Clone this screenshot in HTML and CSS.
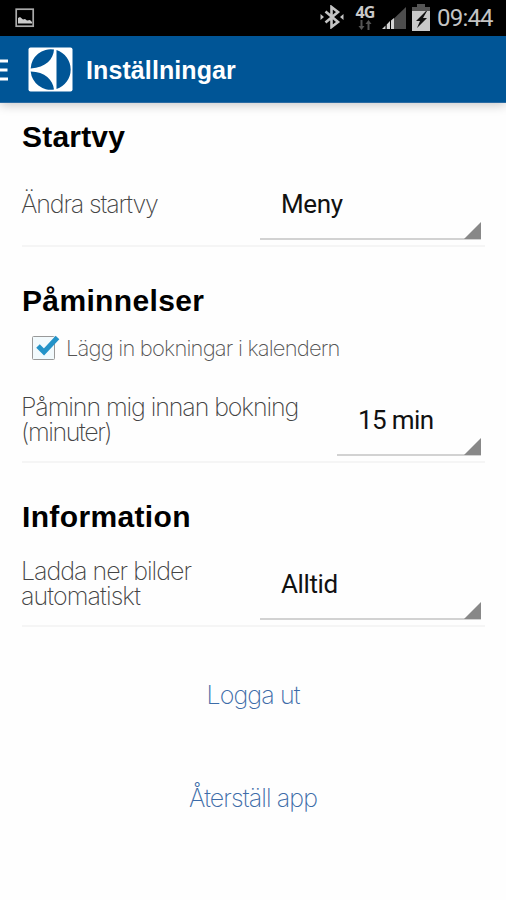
FILE: index.html
```html
<!DOCTYPE html>
<html lang="sv">
<head>
<meta charset="utf-8">
<title>Inställningar</title>
<link rel="stylesheet" href="styles.css">
</head>
<body>
<div class="status">
  <svg class="picture" width="20" height="20" viewBox="0 0 20 20"><rect x="1.2" y="1.2" width="17" height="17" fill="none" stroke="#aaa" stroke-width="1.7"/><path d="M3 15.500V10l2-1 3 2.500 2-.5 2 1.500 3-.5 2 2v1.500z" fill="#ccc"/></svg>
  <svg class="bluetooth" width="24" height="24" viewBox="0 0 24 24"><path d="M5.500 6.500 18 17l-6.500 5V2L18 7 5.500 17.500" fill="none" stroke="#c4c4c4" stroke-width="2.600"/><path d="M.5 9 4 12l-3.500 3zM23.500 9 20 12l3.500 3z" fill="#c4c4c4"/></svg>
  <div class="network"><span>4G</span><svg width="14" height="10" viewBox="0 0 14 10"><path d="M4.500 0v6h2L3.500 10 .5 6h2V0zM11.500 10V4h2l-3-4-3 4h2v6z" fill="#555"/></svg></div>
  <svg class="signal" width="24" height="24" viewBox="0 0 24 24"><path d="M12 12.500 24 1v22H12z" fill="#4d4d4d"/><path d="M0 23 3.500 19.500V23zM4.700 23v-4.500L8 15v8zM9 23V14.500L12 12v11z" fill="#d2d2d2"/></svg>
  <svg class="battery" width="18" height="27" viewBox="0 0 18 27"><path d="M5 0h8v3h5v4H0V3h5z" fill="#555"/><path d="M0 7h18v20H0z" fill="#c9c9c9"/><path d="m14 7-10 10h4l-3 7L15 14h-4l4-7z" fill="#111"/></svg>
  <time>09:44</time>
</div>
<header class="bar">
  <svg class="menu" width="8" height="22" viewBox="0 0 8 22"><path d="M0 2h8M0 11h7.500M0 20h8" stroke="#fff" stroke-width="3.200"/></svg>
  <svg class="logo" width="45" height="45" viewBox="0 0 45 45"><rect x=".5" y=".5" width="44" height="44" rx="2" fill="#fff"/><path d="M26 2.500C25.500 12 18 20.500 2.700 21.500A20 20 0 0 1 26 2.500zM2.700 24.500C17 24.500 25 33 26 42.500A20 20 0 0 1 2.700 24.500zM28.500 3A20.500 20.500 0 0 1 28.500 42z" fill="#005596"/></svg>
  <h1>Inställningar</h1>
</header>
<main>
  <section>
    <h2 class="t1">Startvy</h2>
    <div class="row">
      <p class="label l1">Ändra startvy</p>
      <div class="spinner"><span class="v1">Meny</span></div>
    </div>
  </section>
  <section>
    <h2 class="t2">Påminnelser</h2>
    <div class="check">
      <svg width="30" height="30" viewBox="0 0 30 30"><rect x="2.500" y="5.500" width="22" height="23" rx="1" fill="#f2fafd" stroke="#999"/><path d="m8 15 6 6L27.500 6.500" fill="none" stroke="#2493c8" stroke-width="5"/></svg>
      <span>Lägg in bokningar i kalendern</span>
    </div>
    <div class="row">
      <p class="label"><span class="l2">Påminn mig innan bokning</span><br><span class="l3">(minuter)</span></p>
      <div class="spinner narrow"><span class="v2">15 min</span></div>
    </div>
  </section>
  <section>
    <h2 class="t3">Information</h2>
    <div class="row">
      <p class="label"><span class="l4">Ladda ner bilder</span><br><span class="l5">automatiskt</span></p>
      <div class="spinner"><span class="v3">Alltid</span></div>
    </div>
  </section>
  <a class="action a1">Logga ut</a>
  <a class="action a2">Återställ app</a>
</main>
</body>
</html>
```
FILE: styles.css
```css
* { box-sizing: border-box; }
body { margin: 0; height: 900px; background: #fefefe; color: #000; font-family: "Liberation Sans", sans-serif; overflow: hidden; }
svg { display: block; flex: none; }
h1, h2, p { margin: 0; }
.status { height: 36px; background: #000; display: flex; align-items: flex-start; padding-left: 15px; }
.picture { margin-top: 8px; }
.bluetooth { margin: 5px 0 0 285px; }
.network { width: 20px; margin: 5px 0 0 11px; display: flex; flex-direction: column; align-items: center; }
.network span { font: 700 16px/14px "Open Sans", sans-serif; color: #c8c8c8; letter-spacing: -.8px; }
.network svg { margin-top: 1px; }
.signal { margin: 6px 0 0 7px; }
.battery { margin: 4px 0 0 6px; }
.status time { font: 24px/36px Roboto, sans-serif; color: #c4c4c4; margin-left: 7px; letter-spacing: -.8px; }
.bar { height: 67px; background: #005596; border-bottom: 1px solid #2a6ba3; box-shadow: 0 2px 10px rgba(0,0,0,.22); display: flex; align-items: center; padding-bottom: 1px; }
.menu { margin-top: 3px; }
.logo { margin: 2px 0 0 20px; }
h1 { font: 700 25px/30px "Liberation Sans", sans-serif; color: #fff; margin: 2px 0 0 13px; letter-spacing: .1px; }
main { padding: 0 21px 0 22px; display: flex; flex-direction: column; }
section { display: flex; flex-direction: column; }
h2 { font: 700 30px/34px "Liberation Sans", sans-serif; letter-spacing: .35px; }
.t1 { letter-spacing: .2px; }
section:nth-of-type(1) { padding-top: 17px; height: 144px; }
section:nth-of-type(2) { padding-top: 37px; height: 216px; }
section:nth-of-type(3) { padding-top: 37px; height: 164px; }
.row { margin-top: auto; height: 82px; display: flex; justify-content: space-between; align-items: center; border-bottom: 2px solid #f5f5f5; }
.label { font: 200 25px/25px Inter, sans-serif; color: #444; white-space: nowrap; padding-bottom: 2px; margin-left: -1px; }
.l1 { letter-spacing: -1.15px; }
.l2 { letter-spacing: -1.1px; }
.l3 { letter-spacing: -1.4px; }
.l4 { letter-spacing: -1px; }
.l5 { letter-spacing: -.9px; }
.spinner { position: relative; width: 221px; height: 70px; align-self: flex-end; margin: 0 4px 5px 0; border-bottom: 2px solid #d2d2d2; padding-left: 21px; font: 26px/68px Roboto, sans-serif; color: #111; letter-spacing: -.4px; }
.spinner::after { content: ""; position: absolute; right: 0; bottom: -1px; border-left: 17px solid transparent; border-bottom: 17px solid #888; }
.spinner.narrow { width: 144px; letter-spacing: -.6px; }
.check { display: flex; margin: 13px 0 0 8px; height: 30px; }
.check span { font: 200 22px/30px Inter, sans-serif; color: #555; margin: 2px 0 0 6px; white-space: nowrap; letter-spacing: -.83px; }
.action { align-self: center; font: 200 25px/30px Inter, sans-serif; color: #3d6ca8; letter-spacing: -.9px; margin-right: 1px; }
.a1 { margin-top: 53px; }
.a2 { margin-top: 73px; }
```
